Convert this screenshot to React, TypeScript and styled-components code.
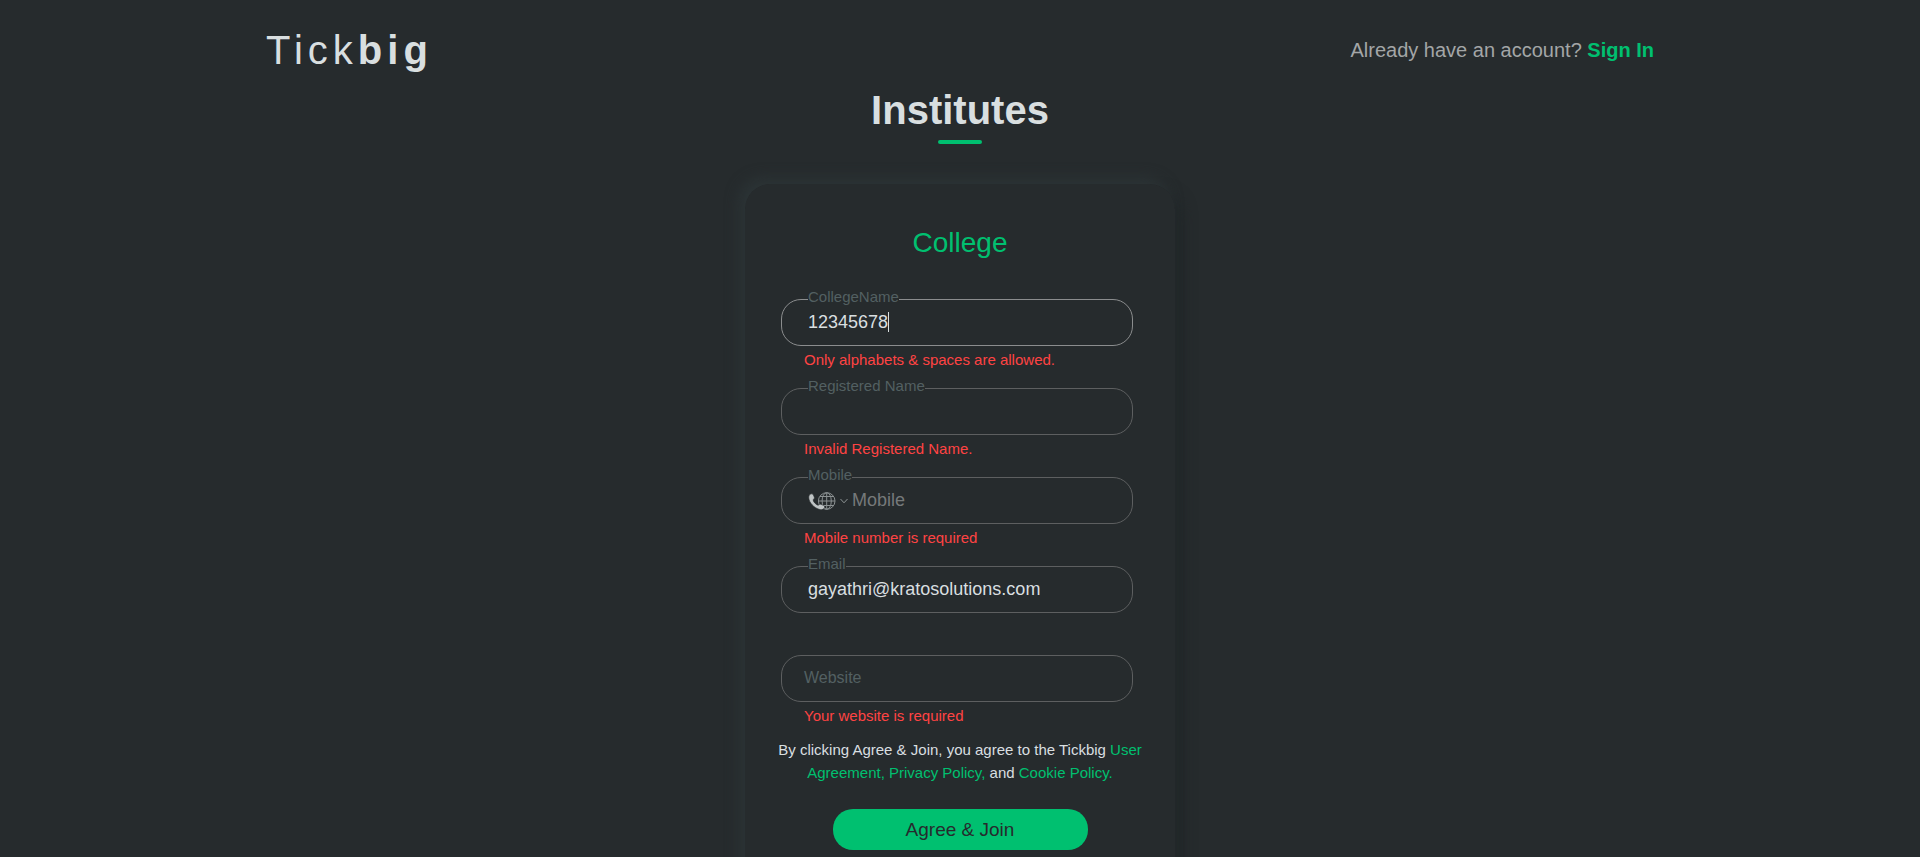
import React, { useState } from 'react';
import styled, { createGlobalStyle } from 'styled-components';

const color = {
  bg: '#262b2d',
  text: '#d9dfe0',
  muted: '#a3a6a7',
  label: '#536062',
  placeholder: '#75797a',
  border: '#5d5f60',
  borderFocus: '#8b8d8e',
  green: '#00c070',
  red: '#ff4343',
};

const GlobalStyle = createGlobalStyle`
  *, *::before, *::after { box-sizing: border-box; }
  body {
    margin: 0;
    background: ${color.bg};
    color: ${color.text};
    font-family: "Liberation Sans", Arial, sans-serif;
    font-size: 15px;
  }
  input, button, select { font-family: inherit; }
`;

const Page = styled.div`
  display: flex;
  flex-direction: column;
  align-items: center;
  min-height: 100vh;
  padding: 27px 24px 40px;
`;

const Header = styled.header`
  display: flex;
  align-items: center;
  justify-content: space-between;
  width: 100%;
  max-width: 1388px;
`;

const Logo = styled.div`
  font-size: 40px;
  line-height: 46px;
  letter-spacing: 5px;
`;

const SignInPrompt = styled.p`
  margin: 0;
  font-size: 20px;
  line-height: 24px;
  color: ${color.muted};
`;

const Link = styled.a<{ $strong?: boolean }>`
  color: ${color.green};
  font-weight: ${(p) => (p.$strong ? 700 : 400)};
  text-decoration: none;
`;

const Title = styled.h1`
  margin: 14px 0 0;
  font-size: 40px;
  line-height: 46px;
  &::after {
    content: "";
    display: block;
    width: 44px;
    height: 4px;
    margin: 7px auto 0;
    border-radius: 2px;
    background: ${color.green};
  }
`;

const Card = styled.form`
  width: 100%;
  max-width: 430px;
  margin-top: 40px;
  padding: 43px 32px 56px;
  border-radius: 25px;
  box-shadow: -6px -6px 14px #2c3436, 8px 8px 14px #212628;
`;

const CardTitle = styled.h2`
  margin: 0 0 40px;
  font-size: 28px;
  font-weight: 400;
  line-height: 32px;
  text-align: center;
  color: ${color.green};
`;

const Group = styled.div`
  margin: 0 10px 0 4px;
  & + & { margin-top: 17px; }
`;

const Field = styled.div<{ $focused?: boolean }>`
  position: relative;
  display: flex;
  align-items: center;
  height: 47px;
  padding: 0 26px;
  border: 1px solid ${(p) => (p.$focused ? color.borderFocus : color.border)};
  border-radius: 20px;
`;

const Label = styled.label<{ $resting?: boolean }>`
  position: absolute;
  top: ${(p) => (p.$resting ? '13px' : '-12px')};
  left: ${(p) => (p.$resting ? '22px' : '26px')};
  font-size: ${(p) => (p.$resting ? '16px' : '15px')};
  line-height: 18px;
  color: ${color.label};
  background: ${color.bg};
  pointer-events: none;
`;

const Input = styled.input`
  flex: 1;
  min-width: 0;
  height: 100%;
  padding: 0;
  border: 0;
  outline: 0;
  background: transparent;
  color: ${color.text};
  caret-color: transparent;
  font-size: 18px;
  &::placeholder { color: ${color.placeholder}; opacity: 1; }
`;

const Caret = styled.span`
  position: absolute;
  top: 12px;
  left: 106px;
  width: 1px;
  height: 20px;
  background: ${color.text};
`;

const CountryButton = styled.button`
  display: flex;
  align-items: center;
  gap: 4px;
  margin-right: 4px;
  padding: 0;
  border: 0;
  background: transparent;
`;

const ErrorText = styled.p`
  min-height: 22px;
  margin: 3px 0 0 23px;
  line-height: 22px;
  color: ${color.red};
`;

const Terms = styled.p`
  margin: 11px 0 25px;
  line-height: 23px;
  text-align: center;
`;

const Submit = styled.button`
  display: block;
  width: 255px;
  height: 41px;
  margin: 0 auto;
  border: 0;
  border-radius: 20px;
  background: ${color.green};
  color: ${color.bg};
  font-size: 19px;
`;

const PhoneGlobe = () => (
  <svg width="28" height="18" viewBox="0 0 28 18" aria-hidden="true">
    <g fill="none" stroke="#8b9192" strokeWidth="1">
      <circle cx="18.7" cy="9" r="8.3" />
      <ellipse cx="18.7" cy="9" rx="4.6" ry="8.3" />
      <path d="M18.700 1v16M10.400 9h16.600M12 4.500h13.400M12 13.500h13.400" />
    </g>
    <path
      fill="#bfc4c5"
      stroke={color.bg}
      strokeWidth="0.6"
      d="M1.800 2.600C2.900 1.400 4.800 1.700 5.400 3L6.300 5.200C6.700 6.300 5.900 7 5.100 7.700C5.200 9.900 7.800 12.600 10.300 13.300C11 12.500 11.800 11.900 12.900 12.300L15.700 13.500C16.900 14.100 17 15.600 16 16.600C14.800 17.800 13 18 11 17.300C5.800 15.500 1.300 10.800 .8 6.200C.6 4.700 1 3.500 1.800 2.600z"
    />
  </svg>
);

const Chevron = () => (
  <svg width="8" height="6" viewBox="0 0 8 6" fill="none" stroke="#8f9596" aria-hidden="true">
    <path d="M.5 1L4 4.800L7.500 1" />
  </svg>
);

type TextFieldProps = {
  id: string;
  label: string;
  type?: string;
  initial?: string;
  placeholder?: string;
  error?: string;
  focused?: boolean;
  resting?: boolean;
  children?: React.ReactNode;
};

const TextField = ({ id, label, type = 'text', initial = '', placeholder, error, focused, resting, children }: TextFieldProps) => {
  const [value, setValue] = useState(initial);
  return (
    <Group>
      <Field $focused={focused}>
        <Label htmlFor={id} $resting={resting && !value}>{label}</Label>
        {children}
        <Input id={id} type={type} value={value} placeholder={placeholder} onChange={(e) => setValue(e.target.value)} />
        {focused && <Caret />}
      </Field>
      <ErrorText>{error}</ErrorText>
    </Group>
  );
};

export default function App() {
  return (
    <>
      <GlobalStyle />
      <Page>
        <Header>
          <Logo>Tick<b>big</b></Logo>
          <SignInPrompt>
            Already have an account? <Link href="#signin" $strong>Sign In</Link>
          </SignInPrompt>
        </Header>
        <Title>Institutes</Title>
        <Card onSubmit={(e) => e.preventDefault()} noValidate>
          <CardTitle>College</CardTitle>
          <TextField id="college" label="CollegeName" initial="12345678" focused error="Only alphabets & spaces are allowed." />
          <TextField id="registered" label="Registered Name" error="Invalid Registered Name." />
          <TextField id="mobile" label="Mobile" type="tel" placeholder="Mobile" error="Mobile number is required">
            <CountryButton type="button" aria-label="Select country">
              <PhoneGlobe />
              <Chevron />
            </CountryButton>
          </TextField>
          <TextField id="email" label="Email" type="email" initial="gayathri@kratosolutions.com" />
          <TextField id="website" label="Website" resting error="Your website is required" />
          <Terms>
            By clicking Agree &amp; Join, you agree to the Tickbig{' '}
            <Link href="#agreement">User Agreement,</Link> <Link href="#privacy">Privacy Policy,</Link> and{' '}
            <Link href="#cookies">Cookie Policy.</Link>
          </Terms>
          <Submit type="submit">Agree &amp; Join</Submit>
        </Card>
      </Page>
    </>
  );
}
